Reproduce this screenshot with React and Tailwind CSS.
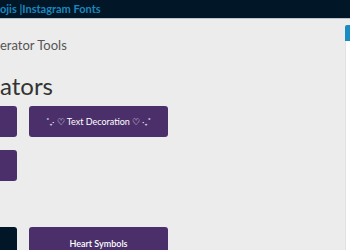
import React from "react";

const rows = [
	[{ label: "", dark: false }, { label: "˚₊‧ ♡ Text Decoration ♡ ‧₊˚", dark: false }],
	[{ label: "", dark: false }],
];

const Button = ({ label, dark, className = "" }) => (
	<button
		className={`h-[31px] rounded-[3px] text-white text-[9px] flex items-center justify-center ${
			dark ? "bg-[#011627]" : "bg-[#4b2f6b]"
		} ${className}`}
	>
		{label}
	</button>
);

const App = () => {
	return (
		<div
			className="w-[350px] h-[250px] overflow-hidden bg-[#ececec]"
			style={{ fontFamily: "Lato, 'Open Sans', sans-serif" }}
		>
			{/* Top bar */}
			<div className="h-[19px] bg-[#011627] border-b border-[#b9c3cc] flex items-center">
				<span className="text-[11px] font-bold text-[#1c87bd] leading-none -mt-[2px]">
					ojis |Instagram Fonts
				</span>
			</div>

			<div className="flex">
				{/* Main column */}
				<div className="w-[345px] shrink-0">
					<p className="mt-[18px] text-[13px] text-[#555] leading-[16px]">erator Tools</p>
					<h1 className="mt-[19px] text-[24px] text-[#333] leading-[28px]">ators</h1>

					<div className="mt-[6px] ml-[-122px] grid grid-cols-[139px_139px] gap-x-[12px] gap-y-[13px]">
						{rows.map((row, i) =>
							row.map((b, j) => <Button key={`${i}-${j}`} {...b} />)
						)}
					</div>

					<div className="mt-[46px] ml-[-122px] grid grid-cols-[139px_139px] gap-x-[12px]">
						<Button label="" dark className="h-[34px]" />
						<Button label="Heart Symbols" className="h-[34px] text-[9px] font-semibold" />
					</div>
				</div>

				{/* Sidebar */}
				<div className="flex-1 mt-[6px] flex flex-col">
					<div className="h-[16px] bg-[#1a8cc2] rounded-tl-[2px]" />
					<div className="flex-1 bg-white border-l border-[#e2e2e2] h-[220px]" />
				</div>
			</div>
		</div>
	);
};

export default App;
